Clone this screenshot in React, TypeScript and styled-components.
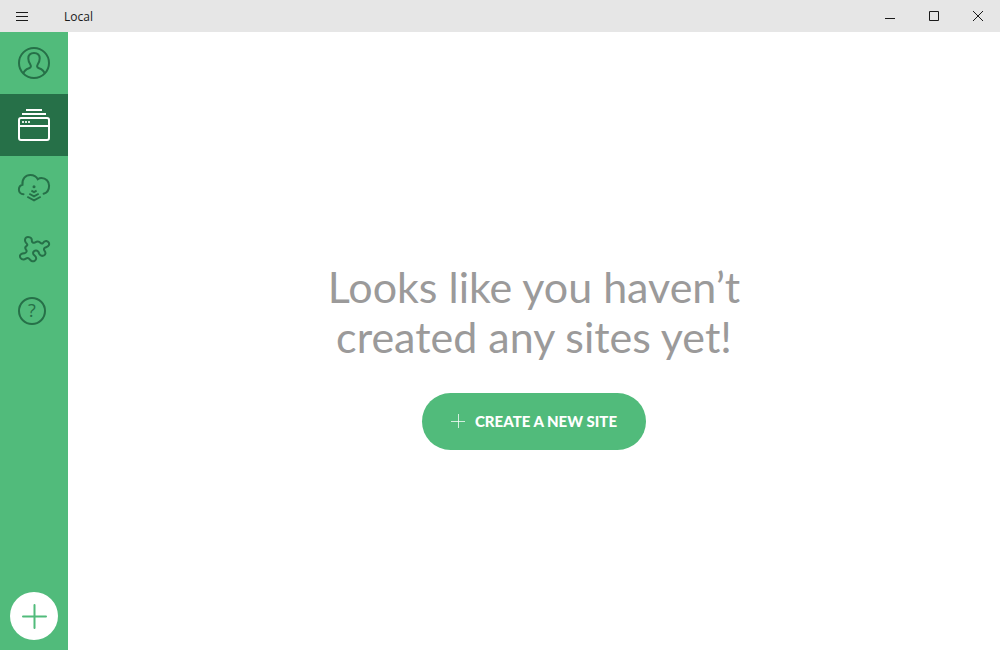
import React from "react";
import styled, { createGlobalStyle } from "styled-components";

const green = "#51bb7b";
const darkGreen = "#267048";

const GlobalStyle = createGlobalStyle`
  * { box-sizing: border-box; }
  body { margin: 0; background: #fff; font-family: Lato, sans-serif; }
  button { border: 0; padding: 0; background: none; font: inherit; color: inherit; cursor: pointer; }
`;

const Window = styled.div`
  display: flex;
  flex-direction: column;
  min-height: 100vh;
`;

const TitleBar = styled.header`
  display: flex;
  align-items: center;
  height: 32px;
  background: #e6e6e6;
  color: #1a1a1a;
`;

const TitleButton = styled.button`
  display: flex;
  align-items: center;
  justify-content: center;
  width: 44px;
  height: 32px;
`;

const Title = styled.div`
  flex: 1;
  padding: 2px 0 0 20px;
  font: 12px/16px "Open Sans", sans-serif;
`;

const Body = styled.div`
  display: flex;
  flex: 1;
`;

const Sidebar = styled.nav`
  display: flex;
  flex-direction: column;
  width: 68px;
  background: ${green};
`;

const NavItem = styled.button<{ $active?: boolean }>`
  display: flex;
  align-items: center;
  justify-content: center;
  height: 62px;
  color: ${(p) => (p.$active ? "#fff" : darkGreen)};
  background: ${(p) => (p.$active ? darkGreen : "transparent")};
`;

const AddButton = styled.button`
  display: flex;
  align-items: center;
  justify-content: center;
  width: 48px;
  height: 48px;
  margin: auto auto 10px;
  border-radius: 50%;
  background: #fff;
  color: ${green};
`;

const Main = styled.main`
  display: flex;
  flex: 1;
  flex-direction: column;
  align-items: center;
  justify-content: center;
  gap: 31px;
  padding-top: 29px;
`;

const Heading = styled.h1`
  max-width: 460px;
  margin: 0;
  font-size: 43px;
  font-weight: 400;
  line-height: 50px;
  text-align: center;
  color: #9b9a9a;
`;

const CreateButton = styled.button`
  display: flex;
  align-items: center;
  gap: 10px;
  height: 57px;
  padding: 0 29px;
  border-radius: 29px;
  background: ${green};
  color: #fff;
  font-size: 15px;
  font-weight: 900;
  line-height: 20px;
`;

const Glyph = styled.svg<{ $thin?: boolean }>`
  display: block;
  fill: none;
  stroke: currentColor;
  stroke-width: ${(p) => (p.$thin ? 1 : 2)};
`;

const QuestionMark = styled.text`
  font: 500 18px "Open Sans", sans-serif;
  fill: currentColor;
  stroke: none;
  text-anchor: middle;
`;

const NavGlyph = ({ children }: { children: React.ReactNode }) => (
  <Glyph width="40" height="40" viewBox="0 0 40 40" aria-hidden="true">
    {children}
  </Glyph>
);

export default function App() {
  return (
    <Window>
      <GlobalStyle />
      <TitleBar>
        <TitleButton aria-label="Menu">
          <Glyph $thin width="12" height="10">
            <path d="M0 1.5H12M0 5.5H12M0 9.5H12" />
          </Glyph>
        </TitleButton>
        <Title>Local</Title>
        <TitleButton aria-label="Minimize">
          <Glyph $thin width="10" height="10">
            <path d="M0 7.5H10" />
          </Glyph>
        </TitleButton>
        <TitleButton aria-label="Maximize">
          <Glyph $thin width="10" height="10">
            <path d="M.5 .5H9.5V9.5H.5Z" />
          </Glyph>
        </TitleButton>
        <TitleButton aria-label="Close">
          <Glyph $thin width="10" height="10">
            <path d="M0 0L10 10M10 0L0 10" />
          </Glyph>
        </TitleButton>
      </TitleBar>
      <Body>
        <Sidebar>
          <NavItem aria-label="Account">
            <NavGlyph>
              <circle cx="20" cy="20" r="15" />
              <path d="M9.3 30.6C10 27.6 11.8 26.3 15 25.2C17.3 24.4 17.3 22.9 16.2 21.2C15 19.4 14.3 17.5 14.3 15.6C14.3 12.1 16.6 10 20 10C23.4 10 25.7 12.1 25.7 15.6C25.7 17.5 25 19.4 23.8 21.2C22.7 22.9 22.7 24.4 25 25.2C28.2 26.3 30 27.6 30.7 30.6" />
            </NavGlyph>
          </NavItem>
          <NavItem $active aria-label="Local sites">
            <NavGlyph>
              <path d="M12 5H28M8 9H32M5 21H35" />
              <rect x="5" y="13" width="30" height="22" rx="2" />
              <path d="M8 17H10M11 17H13M14 17H16" opacity=".85" />
            </NavGlyph>
          </NavItem>
          <NavItem aria-label="Connect">
            <NavGlyph>
              <path
                strokeLinecap="round"
                d="M9.5 27.2C6.7 27.2 4.9 25.2 4.9 22.6C4.9 20.2 6.4 18.3 8.5 17.8C7.8 11.8 11.6 7.9 16.3 7.9C19.6 7.9 22.4 9.5 23.8 12.2C24.8 11.4 26.2 11 27.5 11C31.9 11 35.1 14.4 35.1 18.7C35.1 22.8 32.8 25.8 29.6 26.8"
              />
              <path
                strokeWidth="1.8"
                d="M17.4 23.6L20 25.1L22.6 23.6M15.3 26.8L20 29.4L24.7 26.8M13.3 29.8L20 33.4L26.7 29.8"
              />
              <circle cx="20" cy="19.8" r="1.5" fill="currentColor" stroke="none" />
            </NavGlyph>
          </NavItem>
          <NavItem aria-label="Add-ons">
            <NavGlyph>
              <path
                strokeLinejoin="round"
                d="M11.9 13.6C10.2 11.5 11 7.9 14 7.9C17 7.9 18 9.8 17.8 11.6C17.7 13.2 19.2 14.2 20.6 13.6C22.4 12.6 23.6 11.6 25.4 13C26.6 14 27.6 15.4 28.8 14.2C29.6 12.8 30.8 11.8 32.4 12C34.6 12.4 35.6 14.4 34.9 16.2C34.2 18 32.4 18 31 18.6C29.6 19.4 29.8 20.8 30.6 21.8C32 23.6 31.6 25.8 29.6 26.6C27.8 27.2 26 26.4 25.2 24.6C24.6 22.8 23.8 21.4 21.8 21.6C19.6 21.8 18.6 23.6 19.4 25.2C20.2 26.6 22.2 27 22.2 29.2C22.2 31.6 19.6 32.8 17.6 32C15.6 31.2 15.6 29 13.6 29C12 29 11.4 30.6 9.4 30.4C7 30.2 5.6 28.4 6 26.6C6.6 24.4 8.8 24.4 10.6 24.2C12.6 23.8 13.2 22 12 20.6C10.8 19 11 17.8 12.6 17C14 16.2 13 14.8 11.9 13.6Z"
              />
            </NavGlyph>
          </NavItem>
          <NavItem aria-label="Help">
            <NavGlyph>
              <circle cx="18" cy="20" r="13" />
              <QuestionMark x="18" y="26">?</QuestionMark>
            </NavGlyph>
          </NavItem>
          <AddButton aria-label="Add site">
            <Glyph width="26" height="26">
              <path strokeLinecap="round" d="M13.5 2V25M2 13.5H25" />
            </Glyph>
          </AddButton>
        </Sidebar>
        <Main>
          <Heading>Looks like you haven’t created any sites yet!</Heading>
          <CreateButton>
            <Glyph $thin width="14" height="14">
              <path d="M7.5 0V14M0 7.5H14" opacity=".75" />
            </Glyph>
            CREATE A NEW SITE
          </CreateButton>
        </Main>
      </Body>
    </Window>
  );
}
